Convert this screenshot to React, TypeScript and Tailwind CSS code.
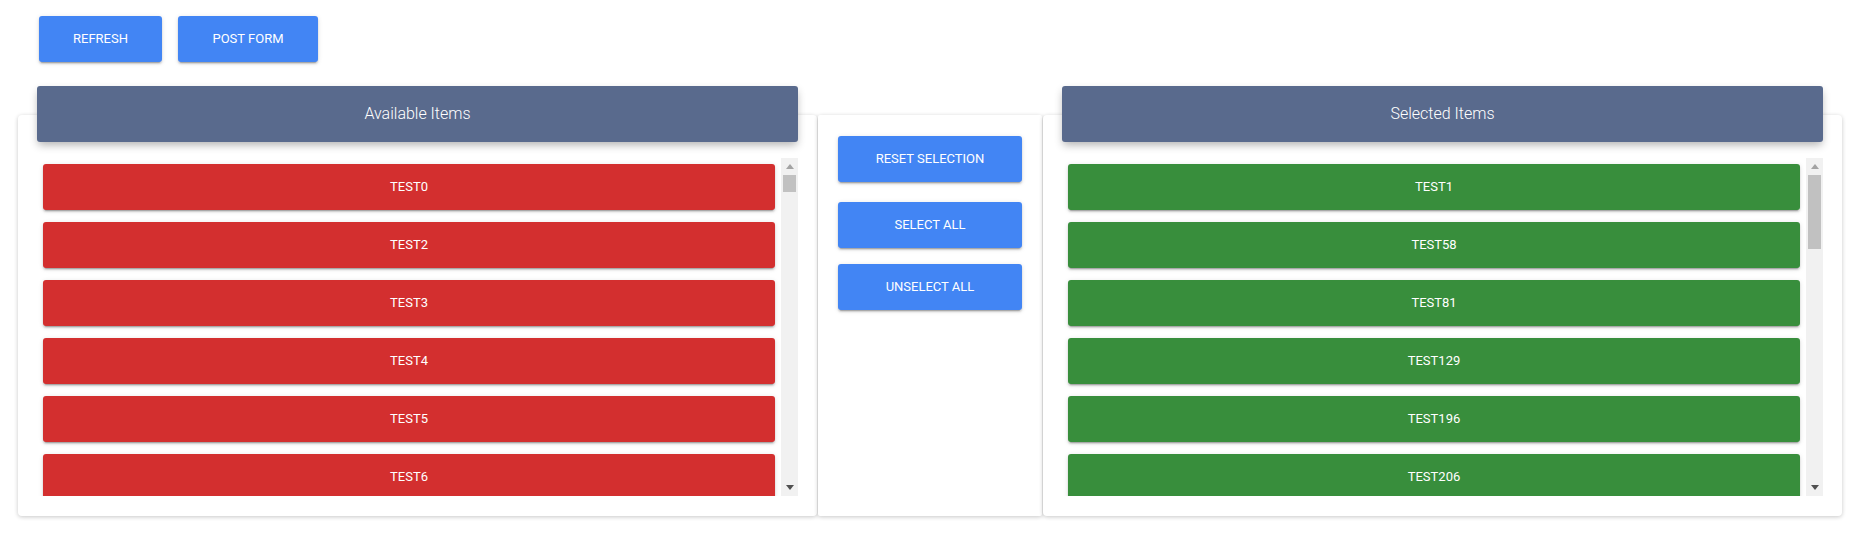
import { useState } from 'react';

const SELECTED = [
  1, 58, 81, 129, 196, 206, 231, 254, 287, 302, 345, 371,
  398, 412, 456, 479, 503, 528, 561, 590, 612, 647, 683, 711,
];

const buildAvailable = () => {
  const out: number[] = [];
  for (let i = 0; out.length < 104; i++) {
    if (!SELECTED.includes(i)) out.push(i);
  }
  return out;
};

const btnShadow =
  'shadow-[0_2px_2px_0_rgba(0,0,0,0.14),0_3px_1px_-2px_rgba(0,0,0,0.2),0_1px_5px_0_rgba(0,0,0,0.12)]';

// classic-looking scrollbar, drawn by hand since the page has overlay scrollbars
function FakeScrollbar({ count }: { count: number }) {
  const track = 304;
  const content = count * 58;
  const thumb = Math.max(17, Math.round((track * 338) / content));
  return (
    <div className="w-[17px] shrink-0 bg-[#f1f1f1] flex flex-col items-center">
      <div className="h-[17px] w-full flex items-center justify-center">
        <svg width="8" height="5" viewBox="0 0 8 5">
          <path d="M0 5 L4 0 L8 5 Z" fill="#a3a3a3" />
        </svg>
      </div>
      <div className="w-[13px] bg-[#c1c1c1]" style={{ height: thumb }} />
      <div className="flex-1" />
      <div className="h-[17px] w-full flex items-center justify-center">
        <svg width="8" height="5" viewBox="0 0 8 5">
          <path d="M0 0 L8 0 L4 5 Z" fill="#505050" />
        </svg>
      </div>
    </div>
  );
}

function ListCard({
  title,
  items,
  color,
  onPick,
}: {
  title: string;
  items: number[];
  color: string;
  onPick: (n: number) => void;
}) {
  return (
    <div className="w-[799px] mt-[29px] bg-white rounded-[4px] shadow-[0_1px_4px_0_rgba(0,0,0,0.22)] flex flex-col pb-[20px]">
      {/* card header floats above the card */}
      <div className="-mt-[29px] mx-[19px] h-[56px] rounded-[3px] bg-[#596a8d] text-white flex items-center justify-center text-[16px] font-light shadow-[0_4px_8px_-1px_rgba(0,0,0,0.3)]">
        {title}
      </div>
      <div className="mx-[19px] mt-[16px] h-[338px] flex">
        <div className="flex-1 overflow-y-scroll [scrollbar-width:none] p-[6px] flex flex-col gap-[12px]">
          {items.map((n) => (
            <button
              key={n}
              onClick={() => onPick(n)}
              className={`shrink-0 h-[46px] w-full rounded-[3px] ${color} text-white text-[13px] font-normal ${btnShadow}`}
            >
              TEST{n}
            </button>
          ))}
        </div>
        <FakeScrollbar count={items.length} />
      </div>
    </div>
  );
}

export default function App() {
  const [selected, setSelected] = useState<number[]>(SELECTED);
  const [available, setAvailable] = useState<number[]>(buildAvailable());

  const select = (n: number) => {
    setAvailable(available.filter((x) => x !== n));
    setSelected([...selected, n]);
  };
  const unselect = (n: number) => {
    setSelected(selected.filter((x) => x !== n));
    setAvailable([...available, n].sort((a, b) => a - b));
  };

  return (
    <div className="min-h-screen bg-white font-['Roboto',sans-serif] pt-[16px]">
      <div className="flex gap-[16px] pl-[39px]">
        <button className={`w-[123px] h-[46px] rounded-[3px] bg-[#4285f4] text-white text-[13px] font-normal ${btnShadow}`}>
          REFRESH
        </button>
        <button className={`w-[140px] h-[46px] rounded-[3px] bg-[#4285f4] text-white text-[13px] font-normal ${btnShadow}`}>
          POST FORM
        </button>
      </div>

      <div className="mt-[24px] pl-[18px] flex gap-[1px] items-start">
        <ListCard title="Available Items" items={available} color="bg-[#d32f2f]" onPick={select} />

        <div className="w-[224px] h-[401px] mt-[29px] bg-white rounded-[2px] shadow-[0_1px_4px_0_rgba(0,0,0,0.22)] px-[20px] pt-[21px] flex flex-col">
          <button
            onClick={() => {
              setSelected(SELECTED);
              setAvailable(buildAvailable());
            }}
            className={`h-[46px] rounded-[3px] bg-[#4285f4] text-white text-[13px] font-normal ${btnShadow}`}
          >
            RESET SELECTION
          </button>
          <button
            onClick={() => {
              setSelected([...selected, ...available].sort((a, b) => a - b));
              setAvailable([]);
            }}
            className={`mt-[20px] h-[46px] rounded-[3px] bg-[#4285f4] text-white text-[13px] font-normal ${btnShadow}`}
          >
            SELECT ALL
          </button>
          <button
            onClick={() => {
              setAvailable([...available, ...selected].sort((a, b) => a - b));
              setSelected([]);
            }}
            className={`mt-[16px] h-[46px] rounded-[3px] bg-[#4285f4] text-white text-[13px] font-normal ${btnShadow}`}
          >
            UNSELECT ALL
          </button>
        </div>

        <ListCard title="Selected Items" items={selected} color="bg-[#388e3c]" onPick={unselect} />
      </div>
    </div>
  );
}
